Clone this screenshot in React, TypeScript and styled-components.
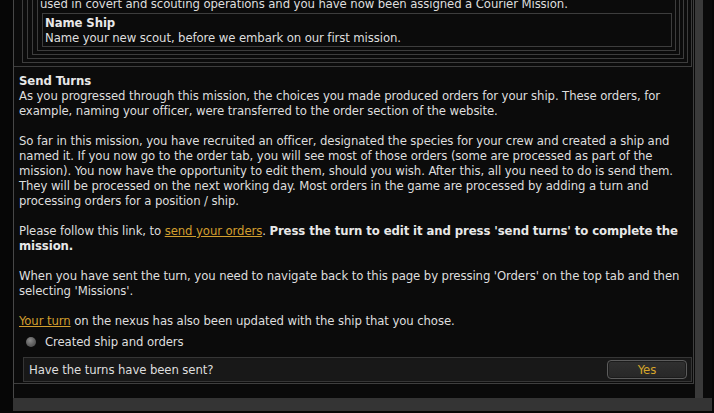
import React from "react";
import styled, { createGlobalStyle } from "styled-components";

const GlobalStyle = createGlobalStyle`
  html, body {
    margin: 0;
    padding: 0;
    width: 714px;
    height: 413px;
    overflow: hidden;
    background: #060606;
  }
  body {
    font-family: "DejaVu Sans Condensed", "DejaVu Sans", sans-serif;
    font-size: 13px;
    line-height: 15px;
    letter-spacing: -0.1px;
    color: #dedede;
  }
`;

const Frame = styled.div`
  margin-left: 13px;
  width: 699px;
  display: flex;
  flex-direction: column;
`;

const TopRow = styled.div`
  height: 398px;
  display: flex;
`;

const Viewport = styled.div`
  width: 680px;
  border-left: 1px solid #474747;
  background: #0a0a0a;
  display: flex;
  flex-direction: column;
`;

const Panel = styled.div`
  height: 383px;
  border-right: 1px solid #3f3f3f;
  border-bottom: 1px solid #3f3f3f;
  background: #0b0b0b;
  overflow: hidden;
  display: flex;
  flex-direction: column;
`;

const Spacer = styled.div`
  width: 1px;
  background: #0a0a0a;
`;

const VScroll = styled.div`
  width: 8px;
  background: #3a3a3a;
`;

const Gutter = styled.div`
  flex: 1;
  background: #0a0a0a;
`;

const HScroll = styled.div`
  height: 13px;
  background: #343434;
`;

const Scrolled = styled.div`
  margin-top: -20px;
  margin-right: 1px;
`;

const NestBox = styled.div<{ $outer?: boolean; $inner?: boolean }>`
  border: 1px solid #3d3d3d;
  border-left: ${(p) => (p.$outer ? "none" : "1px solid #3d3d3d")};
  border-top: ${(p) => (p.$outer ? "none" : "1px solid #3d3d3d")};
  padding: ${(p) =>
    p.$outer ? "0 3px 3px 8px" : p.$inner ? "1px 2px 1px 2px" : "3px 3px 3px 4px"};
  margin-top: ${(p) => (p.$inner ? "2px" : "0")};
`;

const NestText = styled.div<{ $shift?: boolean }>`
  white-space: nowrap;
  margin-left: ${(p) => (p.$shift ? "-2px" : "0")};
`;

const Heading = styled.div`
  font-weight: bold;
  color: #e8e8e8;
  white-space: nowrap;
`;

const Section = styled.div`
  padding: 6px 4px 0 5px;
`;

const Para = styled.p<{ $last?: boolean }>`
  margin: 0 0 ${(p) => (p.$last ? "0" : "15px")};
  white-space: nowrap;
`;

const Link = styled.a`
  color: #d29e2e;
  text-decoration: underline;
  cursor: pointer;
`;

const Strong = styled.b`
  color: #e8e8e8;
`;

const RadioRow = styled.div`
  display: flex;
  align-items: center;
  gap: 9px;
  padding: 6px 0 8px 12px;
  height: 15px;
  box-sizing: content-box;
`;

const RadioDot = styled.span`
  width: 10px;
  height: 10px;
  border-radius: 50%;
  background: radial-gradient(circle at 40% 35%, #8c8c8c 0%, #5e5e5e 55%, #444 100%);
  flex: none;
`;

const Question = styled.div`
  margin: 0 1px 0 9px;
  height: 23px;
  border: 1px solid #363636;
  background: #181818;
  display: flex;
  align-items: center;
  justify-content: space-between;
  padding: 0 4px 0 5px;
`;

const YesButton = styled.button`
  width: 80px;
  height: 19px;
  padding: 0;
  border: 1px solid #5c5c5c;
  border-radius: 4px;
  background: linear-gradient(#303030, #272727);
  box-shadow: inset 0 0 0 1px #1c1c1c;
  color: #d6a62a;
  font-family: inherit;
  font-size: 13px;
  line-height: 15px;
  cursor: pointer;
`;

export default function App() {
  return (
    <>
      <GlobalStyle />
      <Frame>
        <TopRow>
          <Viewport>
            <Panel>
              <Scrolled>
                <NestBox $outer>
                  <NestBox>
                    <NestBox>
                      <NestBox>
                        <NestBox>
                          <NestText $shift>
                            used in covert and scouting operations and you have now been assigned a Courier Mission.
                          </NestText>
                          <NestBox $inner>
                            <Heading>Name Ship</Heading>
                            <NestText>Name your new scout, before we embark on our first mission.</NestText>
                          </NestBox>
                        </NestBox>
                      </NestBox>
                    </NestBox>
                  </NestBox>
                </NestBox>
              </Scrolled>
              <Section>
                <Heading>Send Turns</Heading>
                <Para>
                  As you progressed through this mission, the choices you made produced orders for your ship. These orders, for
                  <br />
                  example, naming your officer, were transferred to the order section of the website.
                </Para>
                <Para>
                  So far in this mission, you have recruited an officer, designated the species for your crew and created a ship and
                  <br />
                  named it. If you now go to the order tab, you will see most of those orders (some are processed as part of the
                  <br />
                  mission). You now have the opportunity to edit them, should you wish. After this, all you need to do is send them.
                  <br />
                  They will be processed on the next working day. Most orders in the game are processed by adding a turn and
                  <br />
                  processing orders for a position / ship.
                </Para>
                <Para>
                  Please follow this link, to <Link>send your orders</Link>.{" "}
                  <Strong>
                    Press the turn to edit it and press 'send turns' to complete the
                    <br />
                    mission.
                  </Strong>
                </Para>
                <Para>
                  When you have sent the turn, you need to navigate back to this page by pressing 'Orders' on the top tab and then
                  <br />
                  selecting 'Missions'.
                </Para>
                <Para $last>
                  <Link>Your turn</Link> on the nexus has also been updated with the ship that you chose.
                </Para>
              </Section>
              <RadioRow>
                <RadioDot />
                <span>Created ship and orders</span>
              </RadioRow>
              <Question>
                <span>Have the turns have been sent?</span>
                <YesButton>Yes</YesButton>
              </Question>
            </Panel>
          </Viewport>
          <Spacer />
          <VScroll />
          <Gutter />
        </TopRow>
        <HScroll />
      </Frame>
    </>
  );
}
